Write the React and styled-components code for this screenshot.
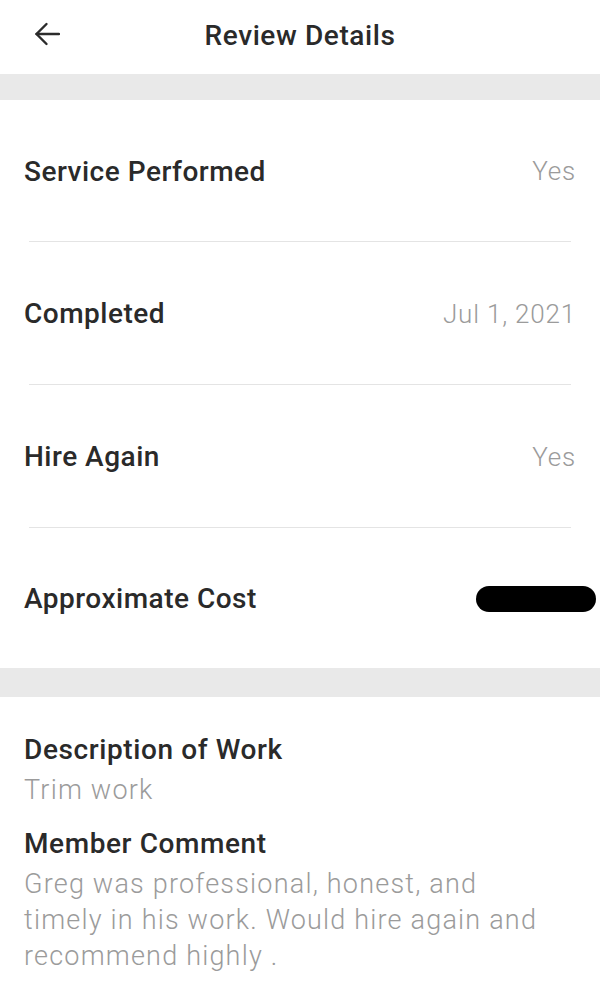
import React from "react";
import styled, { createGlobalStyle } from "styled-components";

const Global = createGlobalStyle`
  html, body { margin: 0; padding: 0; background: #ffffff; }
  body { font-family: Roboto, "Noto Sans", sans-serif; -webkit-font-smoothing: antialiased; }
  * { box-sizing: border-box; }
`;

const Page = styled.div`
  width: 600px;
  min-height: 990px;
  background: #fff;
  display: flex;
  flex-direction: column;
`;

const Header = styled.header`
  height: 74px;
  position: relative;
  display: flex;
  align-items: center;
  justify-content: center;
  padding-bottom: 4px;
`;

const BackButton = styled.button`
  position: absolute;
  left: 33px;
  top: 22px;
  width: 28px;
  height: 24px;
  border: 0;
  padding: 0;
  background: transparent;
  display: flex;
  align-items: center;
  justify-content: center;
  color: #2b2b2b;
`;

const Title = styled.h1`
  margin: 0;
  font-size: 28px;
  font-weight: 500;
  letter-spacing: 0.6px;
  color: #2a2a2a;
`;

const Band = styled.div`
  height: ${(p) => p.$h}px;
  background: #e9e9e9;
`;

const List = styled.section`
  display: flex;
  flex-direction: column;
`;

const Row = styled.div`
  height: ${(p) => p.$h}px;
  padding: 1px 24px 0;
  display: flex;
  align-items: center;
  justify-content: space-between;
`;

const Divider = styled.div`
  height: 1px;
  margin: 0 29px;
  background: #e4e4e4;
`;

const Label = styled.span`
  font-size: 28px;
  font-weight: 500;
  letter-spacing: 0.5px;
  color: #2a2a2a;
`;

const Value = styled.span`
  font-size: 26px;
  font-weight: 300;
  letter-spacing: 0.8px;
  color: #9b9b9b;
`;

const Redacted = styled.span`
  width: 120px;
  height: 26px;
  margin-right: -20px;
  border-radius: 13px;
  background: #000;
`;

const Details = styled.section`
  padding: 35px 24px 0;
  display: flex;
  flex-direction: column;
`;

const Heading = styled.h2`
  margin: 0;
  font-size: 28px;
  line-height: 36px;
  font-weight: 500;
  letter-spacing: 0.6px;
  color: #2a2a2a;
`;

const Body = styled.p`
  margin: 4px 0 ${(p) => p.$mb || 0}px;
  font-size: 27px;
  line-height: 36px;
  font-weight: 300;
  letter-spacing: 1.2px;
  color: #9b9b9b;
  max-width: 526px;
`;

const ArrowIcon = () => (
  <svg width="26" height="24" viewBox="0 0 26 24" fill="none" stroke="currentColor" strokeWidth="2.4" strokeLinecap="round" strokeLinejoin="round">
    <path d="M25 12H2.5" />
    <path d="M12.5 2L2.5 12l10 10" />
  </svg>
);

const rows = [
  { label: "Service Performed", value: "Yes", h: 141 },
  { label: "Completed", value: "Jul 1, 2021", h: 142 },
  { label: "Hire Again", value: "Yes", h: 142 },
  { label: "Approximate Cost", value: null, h: 140 },
];

export default function App() {
  return (
    <>
      <Global />
      <Page>
        <Header>
          <BackButton aria-label="Back">
            <ArrowIcon />
          </BackButton>
          <Title>Review Details</Title>
        </Header>
        <Band $h={26} />
        <List>
          {rows.map((r, i) => (
            <React.Fragment key={r.label}>
              <Row $h={r.h}>
                <Label>{r.label}</Label>
                {r.value ? <Value>{r.value}</Value> : <Redacted />}
              </Row>
              {i < rows.length - 1 && <Divider />}
            </React.Fragment>
          ))}
        </List>
        <Band $h={29} />
        <Details>
          <Heading>Description of Work</Heading>
          <Body $mb={18}>Trim work</Body>
          <Heading>Member Comment</Heading>
          <Body>
            Greg was professional, honest, and timely in his work. Would hire again and recommend highly .
          </Body>
        </Details>
      </Page>
    </>
  );
}
